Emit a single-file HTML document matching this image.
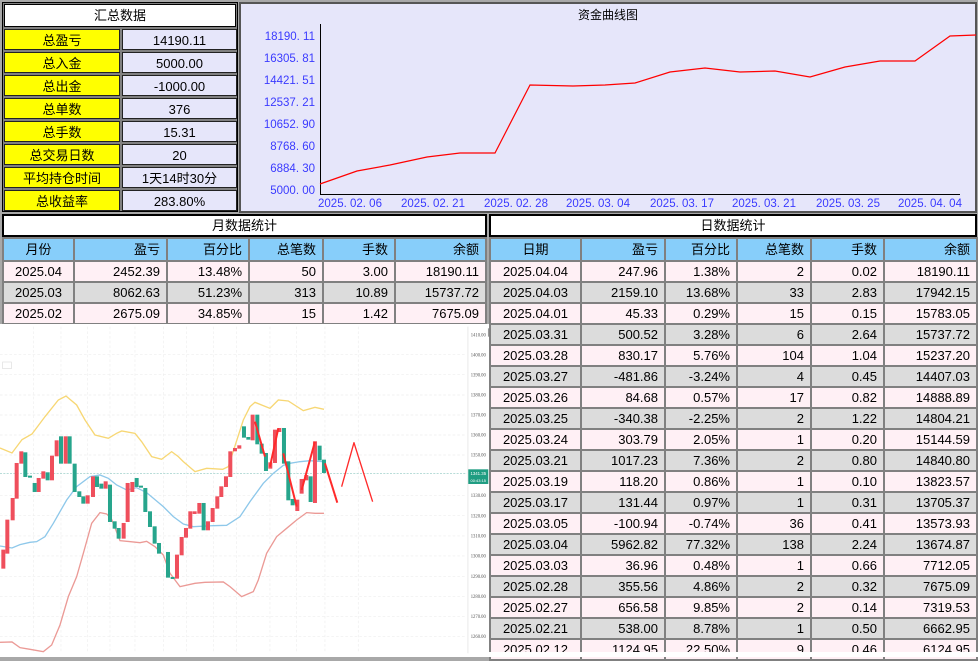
<!DOCTYPE html>
<html><head><meta charset="utf-8"><style>
*{margin:0;padding:0;box-sizing:border-box}
body{width:978px;height:657px;overflow:hidden;background:#a8a8a8;font-family:"Liberation Sans","Noto Sans CJK SC",sans-serif;position:relative;color:#000}
.abs{position:absolute}
.sum{left:2px;top:2px;width:236px;height:210px;background:#808080;border:1px solid #000}
.sum .t{position:absolute;left:1px;top:1px;width:232px;height:23px;background:#fff;border:1px solid #000;text-align:center;font-size:13px;line-height:21px}
.sum .l,.sum .v{position:absolute;height:21px;font-size:13px;line-height:21px;text-align:center;border:1px solid #222}
.sum .l{left:1px;width:116px;background:#ffff00}
.sum .v{left:119px;width:115px;background:#e6e6fa}
.chart{left:239px;top:2px;width:738px;height:211px;background:#e6e6fa;border:2px solid #555}
table{position:absolute;border-collapse:separate;border-spacing:2px;background:#808080;table-layout:fixed;font-size:13px}
td{height:19px;line-height:19px;padding:0 6px 0 0;text-align:right;white-space:nowrap;overflow:hidden}
td:first-child{text-align:center;padding:0}
tr.h td{background:#87cefa;height:21px;line-height:21px}
tr.p td{background:#fff0f5}
tr.g td{background:#dcdcdc}
.ttl{position:absolute;background:#fff;border:2px solid #000;text-align:center;font-size:13px;line-height:19px;height:23px}
</style></head><body>

<div class="abs sum">
<div class="t">汇总数据</div>
<div class="l" style="top:26px">总盈亏</div><div class="v" style="top:26px">14190.11</div>
<div class="l" style="top:49px">总入金</div><div class="v" style="top:49px">5000.00</div>
<div class="l" style="top:72px">总出金</div><div class="v" style="top:72px">-1000.00</div>
<div class="l" style="top:95px">总单数</div><div class="v" style="top:95px">376</div>
<div class="l" style="top:118px">总手数</div><div class="v" style="top:118px">15.31</div>
<div class="l" style="top:141px">总交易日数</div><div class="v" style="top:141px">20</div>
<div class="l" style="top:164px">平均持仓时间</div><div class="v" style="top:164px">1天14时30分</div>
<div class="l" style="top:187px">总收益率</div><div class="v" style="top:187px">283.80%</div>
</div>

<div class="abs chart"></div>
<svg class="abs" style="left:0;top:0" width="978" height="215" font-family="Liberation Sans, Noto Sans CJK SC, sans-serif">
<text x="608" y="19" font-size="12" text-anchor="middle">资金曲线图</text>
<line x1="320.5" y1="24" x2="320.5" y2="194" stroke="#000"/>
<line x1="320" y1="194.5" x2="960" y2="194.5" stroke="#000"/>
<g font-size="11.5" fill="#3a3aff" text-anchor="end">
<text x="315" y="40">18190. 11</text><text x="315" y="62">16305. 81</text><text x="315" y="84">14421. 51</text><text x="315" y="106">12537. 21</text><text x="315" y="128">10652. 90</text><text x="315" y="150">8768. 60</text><text x="315" y="172">6884. 30</text><text x="315" y="194">5000. 00</text>
</g>
<g font-size="11.5" fill="#3a3aff" text-anchor="middle">
<text x="350" y="207">2025. 02. 06</text><text x="433" y="207">2025. 02. 21</text><text x="516" y="207">2025. 02. 28</text><text x="598" y="207">2025. 03. 04</text><text x="682" y="207">2025. 03. 17</text><text x="764" y="207">2025. 03. 21</text><text x="848" y="207">2025. 03. 25</text><text x="930" y="207">2025. 04. 04</text>
</g>
<polyline fill="none" stroke="#f00" stroke-width="1.2" points="320,184 357,171 390,165 427,157 460,153 495,153 530,85 573,86 605,85 635,83 670,72 705,68 740,72 775,71 810,77 845,67 880,61 915,61 950,36 976,35"/>
</svg>

<div class="ttl" style="left:2px;top:214px;width:485px">月数据统计</div>
<table style="left:2px;top:237px;width:485px">
<colgroup><col style="width:69px"><col style="width:91px"><col style="width:80px"><col style="width:72px"><col style="width:70px"><col></colgroup>
<tr class="h"><td>月份</td><td>盈亏</td><td>百分比</td><td>总笔数</td><td>手数</td><td>余额</td></tr>
<tr class="p"><td>2025.04</td><td>2452.39</td><td>13.48%</td><td>50</td><td>3.00</td><td>18190.11</td></tr>
<tr class="g"><td>2025.03</td><td>8062.63</td><td>51.23%</td><td>313</td><td>10.89</td><td>15737.72</td></tr>
<tr class="p"><td>2025.02</td><td>2675.09</td><td>34.85%</td><td>15</td><td>1.42</td><td>7675.09</td></tr>
</table>

<div class="ttl" style="left:489px;top:214px;width:488px">日数据统计</div>
<table style="left:489px;top:237px;width:489px">
<colgroup><col style="width:89px"><col style="width:82px"><col style="width:70px"><col style="width:72px"><col style="width:71px"><col></colgroup>
<tr class="h"><td>日期</td><td>盈亏</td><td>百分比</td><td>总笔数</td><td>手数</td><td>余额</td></tr>
<tr class="p"><td>2025.04.04</td><td>247.96</td><td>1.38%</td><td>2</td><td>0.02</td><td>18190.11</td></tr>
<tr class="g"><td>2025.04.03</td><td>2159.10</td><td>13.68%</td><td>33</td><td>2.83</td><td>17942.15</td></tr>
<tr class="p"><td>2025.04.01</td><td>45.33</td><td>0.29%</td><td>15</td><td>0.15</td><td>15783.05</td></tr>
<tr class="g"><td>2025.03.31</td><td>500.52</td><td>3.28%</td><td>6</td><td>2.64</td><td>15737.72</td></tr>
<tr class="p"><td>2025.03.28</td><td>830.17</td><td>5.76%</td><td>104</td><td>1.04</td><td>15237.20</td></tr>
<tr class="g"><td>2025.03.27</td><td>-481.86</td><td>-3.24%</td><td>4</td><td>0.45</td><td>14407.03</td></tr>
<tr class="p"><td>2025.03.26</td><td>84.68</td><td>0.57%</td><td>17</td><td>0.82</td><td>14888.89</td></tr>
<tr class="g"><td>2025.03.25</td><td>-340.38</td><td>-2.25%</td><td>2</td><td>1.22</td><td>14804.21</td></tr>
<tr class="p"><td>2025.03.24</td><td>303.79</td><td>2.05%</td><td>1</td><td>0.20</td><td>15144.59</td></tr>
<tr class="g"><td>2025.03.21</td><td>1017.23</td><td>7.36%</td><td>2</td><td>0.80</td><td>14840.80</td></tr>
<tr class="p"><td>2025.03.19</td><td>118.20</td><td>0.86%</td><td>1</td><td>0.10</td><td>13823.57</td></tr>
<tr class="g"><td>2025.03.17</td><td>131.44</td><td>0.97%</td><td>1</td><td>0.31</td><td>13705.37</td></tr>
<tr class="p"><td>2025.03.05</td><td>-100.94</td><td>-0.74%</td><td>36</td><td>0.41</td><td>13573.93</td></tr>
<tr class="g"><td>2025.03.04</td><td>5962.82</td><td>77.32%</td><td>138</td><td>2.24</td><td>13674.87</td></tr>
<tr class="p"><td>2025.03.03</td><td>36.96</td><td>0.48%</td><td>1</td><td>0.66</td><td>7712.05</td></tr>
<tr class="g"><td>2025.02.28</td><td>355.56</td><td>4.86%</td><td>2</td><td>0.32</td><td>7675.09</td></tr>
<tr class="p"><td>2025.02.27</td><td>656.58</td><td>9.85%</td><td>2</td><td>0.14</td><td>7319.53</td></tr>
<tr class="g"><td>2025.02.21</td><td>538.00</td><td>8.78%</td><td>1</td><td>0.50</td><td>6662.95</td></tr>
<tr class="p"><td>2025.02.12</td><td>1124.95</td><td>22.50%</td><td>9</td><td>0.46</td><td>6124.95</td></tr>
</table>
<div class="abs" style="left:488px;top:652px;width:490px;height:5px;background:#fff"></div>

<svg class="abs" style="left:0;top:324px" width="489" height="333">
<rect width="489" height="333" fill="#fff"/>
<g transform="translate(0,-4) scale(0.3333)">
<g stroke="#eee" stroke-width="2" stroke-dasharray="8,6">
<line x1="0" y1="104" x2="1400" y2="104"/><line x1="0" y1="164" x2="1400" y2="164"/><line x1="0" y1="225" x2="1400" y2="225"/><line x1="0" y1="285" x2="1400" y2="285"/><line x1="0" y1="345" x2="1400" y2="345"/><line x1="0" y1="405" x2="1400" y2="405"/><line x1="0" y1="526" x2="1400" y2="526"/><line x1="0" y1="587" x2="1400" y2="587"/><line x1="0" y1="648" x2="1400" y2="648"/><line x1="0" y1="708" x2="1400" y2="708"/><line x1="0" y1="769" x2="1400" y2="769"/><line x1="0" y1="829" x2="1400" y2="829"/><line x1="0" y1="889" x2="1400" y2="889"/><line x1="0" y1="949" x2="1400" y2="949"/>
<line x1="100" y1="20" x2="100" y2="1000"/><line x1="183" y1="20" x2="183" y2="1000"/><line x1="263" y1="20" x2="263" y2="1000"/><line x1="330" y1="20" x2="330" y2="1000"/><line x1="405" y1="20" x2="405" y2="1000"/><line x1="490" y1="20" x2="490" y2="1000"/><line x1="560" y1="20" x2="560" y2="1000"/><line x1="640" y1="20" x2="640" y2="1000"/><line x1="710" y1="20" x2="710" y2="1000"/><line x1="810" y1="20" x2="810" y2="1000"/><line x1="890" y1="20" x2="890" y2="1000"/><line x1="975" y1="20" x2="975" y2="1000"/><line x1="1075" y1="20" x2="1075" y2="1000"/>
</g>
<line x1="0" y1="460" x2="1405" y2="460" stroke="#8cc8c0" stroke-width="2" stroke-dasharray="6,4"/>
<polyline fill="none" stroke="#f7d774" stroke-width="4" points="0,384 36,399 66,359 96,342 135,290 175,240 198,228 230,255 255,300 285,345 325,355 350,340 365,333 405,340 425,365 455,410 485,418 515,395 535,410 550,425 585,455 620,445 668,448 685,440 730,300 750,260 765,247 810,265 835,240 865,243 910,272 945,262 972,268"/>
<polyline fill="none" stroke="#8ec8ea" stroke-width="4" points="0,678 36,684 60,674 90,667 110,665 135,650 160,610 200,540 230,500 270,470 300,465 325,475 350,495 380,510 410,503 440,518 490,560 520,590 550,612 580,620 640,617 680,616 720,590 750,545 790,490 820,460 850,436 870,430 900,425 930,422 972,425"/>
<polyline fill="none" stroke="#eb9a96" stroke-width="4" points="0,967 36,966 60,983 90,988 130,995 155,975 180,915 205,830 230,770 250,700 275,610 300,578 320,582 335,598 360,662 420,668 440,664 465,680 490,705 510,760 540,800 585,790 615,787 670,786 690,800 725,830 760,815 775,780 800,700 830,650 860,625 890,600 920,578 945,580 972,580"/>
<g stroke-width="2">
<g fill="#ef4f5c" stroke="#ef4f5c">
<rect x="5" y="690" width="10" height="55"/><rect x="17" y="600" width="10" height="100"/><rect x="33" y="535" width="10" height="65"/><rect x="45" y="430" width="10" height="105"/><rect x="59" y="395" width="10" height="35"/><rect x="111" y="475" width="10" height="40"/><rect x="125" y="455" width="10" height="20"/><rect x="151" y="408" width="10" height="72"/><rect x="165" y="362" width="10" height="46"/><rect x="192" y="350" width="10" height="80"/><rect x="258" y="527" width="10" height="23"/><rect x="274" y="470" width="10" height="60"/><rect x="312" y="485" width="10" height="20"/><rect x="366" y="610" width="10" height="45"/><rect x="378" y="490" width="10" height="115"/><rect x="392" y="487" width="10" height="28"/><rect x="526" y="705" width="10" height="70"/><rect x="540" y="652" width="10" height="53"/><rect x="553" y="625" width="10" height="27"/><rect x="566" y="575" width="10" height="50"/><rect x="579" y="575" width="10" height="6"/><rect x="593" y="550" width="10" height="30"/><rect x="619" y="605" width="10" height="25"/><rect x="633" y="565" width="10" height="40"/><rect x="647" y="530" width="10" height="35"/><rect x="659" y="500" width="10" height="30"/><rect x="673" y="470" width="10" height="30"/><rect x="686" y="395" width="10" height="75"/><rect x="700" y="385" width="10" height="8"/><rect x="713" y="377" width="10" height="8"/><rect x="753" y="285" width="10" height="75"/><rect x="806" y="428" width="10" height="17"/><rect x="820" y="330" width="10" height="98"/><rect x="833" y="325" width="10" height="10"/><rect x="887" y="540" width="10" height="32"/><rect x="900" y="478" width="10" height="42"/><rect x="914" y="466" width="10" height="14"/><rect x="940" y="365" width="10" height="183"/>
</g>
<g fill="#27a58c" stroke="#27a58c">
<rect x="71" y="398" width="10" height="72"/><rect x="85" y="468" width="10" height="4"/><rect x="99" y="490" width="10" height="25"/><rect x="138" y="458" width="10" height="22"/><rect x="178" y="350" width="10" height="80"/><rect x="204" y="350" width="10" height="80"/><rect x="219" y="432" width="10" height="83"/><rect x="233" y="515" width="10" height="15"/><rect x="245" y="530" width="10" height="20"/><rect x="286" y="470" width="10" height="30"/><rect x="299" y="492" width="10" height="13"/><rect x="325" y="495" width="10" height="110"/><rect x="339" y="605" width="10" height="20"/><rect x="351" y="625" width="10" height="30"/><rect x="405" y="475" width="10" height="25"/><rect x="418" y="498" width="10" height="4"/><rect x="431" y="505" width="10" height="70"/><rect x="445" y="575" width="10" height="45"/><rect x="459" y="620" width="10" height="50"/><rect x="472" y="670" width="10" height="30"/><rect x="499" y="697" width="10" height="75"/><rect x="513" y="772" width="10" height="4"/><rect x="606" y="550" width="10" height="80"/><rect x="727" y="320" width="10" height="32"/><rect x="740" y="352" width="10" height="6"/><rect x="767" y="285" width="10" height="87"/><rect x="780" y="372" width="10" height="28"/><rect x="793" y="400" width="10" height="52"/><rect x="847" y="325" width="10" height="105"/><rect x="860" y="425" width="10" height="115"/><rect x="873" y="538" width="10" height="17"/><rect x="927" y="470" width="10" height="75"/><rect x="954" y="378" width="10" height="42"/><rect x="967" y="420" width="10" height="38"/>
</g>
</g>
<g fill="none" stroke="#ff2a2a" stroke-width="6" stroke-linejoin="round">
<polyline points="765,305 795,410"/><polyline points="810,440 835,325"/><polyline points="850,400 890,560"/><polyline points="905,510 945,365"/><polyline points="975,430 1012,548"/><polyline stroke-width="4" points="1025,500 1062,368 1118,545"/>
</g>
<rect x="1400" y="20" width="70" height="1000" fill="#fff"/>
<line x1="1404" y1="20" x2="1404" y2="1000" stroke="#ddd" stroke-width="2"/>
<g font-size="14" fill="#555" font-family="Liberation Serif, serif" text-anchor="middle">
<text x="1435" y="49">1410.00</text><text x="1435" y="109">1400.00</text><text x="1435" y="169">1390.00</text><text x="1435" y="230">1380.00</text><text x="1435" y="290">1370.00</text><text x="1435" y="350">1360.00</text><text x="1435" y="410">1350.00</text><text x="1435" y="531">1330.00</text><text x="1435" y="592">1320.00</text><text x="1435" y="653">1310.00</text><text x="1435" y="713">1300.00</text><text x="1435" y="774">1290.00</text><text x="1435" y="834">1280.00</text><text x="1435" y="894">1270.00</text><text x="1435" y="954">1260.00</text>
</g>
<rect x="1405" y="448" width="60" height="44" fill="#1f9d82"/>
<text x="1435" y="465" font-size="13" fill="#fff" text-anchor="middle">1341.35</text>
<text x="1435" y="486" font-size="12" fill="#fff" text-anchor="middle">00:43:15</text>
<rect x="8" y="126" width="26" height="20" fill="none" stroke="#ddd" stroke-width="2"/>
<rect x="1464" y="25" width="6" height="25" fill="#999"/>
</g>
</svg>
</body></html>
